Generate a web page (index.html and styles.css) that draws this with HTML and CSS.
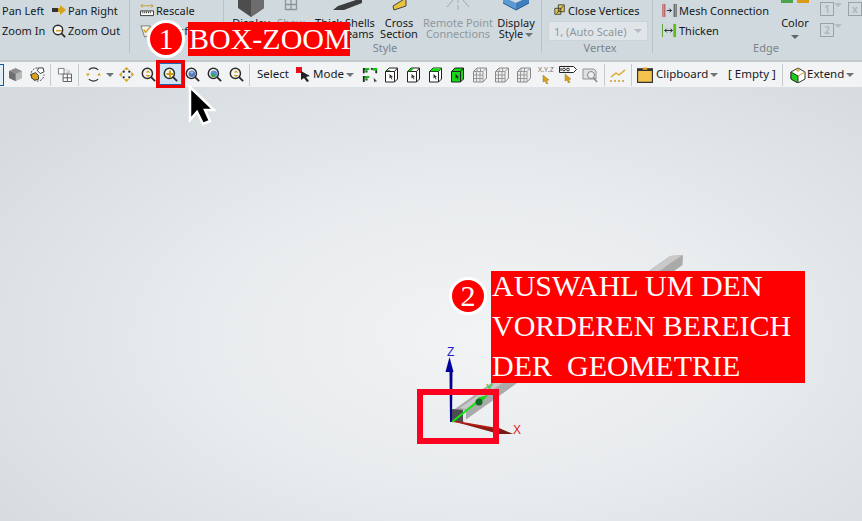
FILE: index.html
```html
<!DOCTYPE html>
<html lang="de">
<head>
<meta charset="utf-8">
<title>Box-Zoom</title>
<link rel="stylesheet" href="styles.css">
</head>
<body>
<svg class="defs" width="0" height="0">
  <symbol id="mag" viewBox="0 0 16 16">
    <circle cx="6.8" cy="6.8" r="5.4" fill="#f6f6f2" stroke="#2b2b2b" stroke-width="1.6"/>
    <path d="M10.8 10.8 15 15" stroke="#2b2b2b" stroke-width="2"/>
  </symbol>
  <symbol id="cube" viewBox="0 0 16 16">
    <path d="M1.5 4.5 5 1h8.5v11L10.500 15H1.500z" fill="#fff" stroke="#222"/>
    <path d="M1.500 4.500h9v10.500M10.500 4.500 13.500 1" fill="none" stroke="#222"/>
    <path d="M5.500 7l3.500 3-1.500.2 1 2-.8.4-1-2-1.200 1z" fill="#333"/>
  </symbol>
  <symbol id="gridcube" viewBox="0 0 16 16">
    <path d="M1.500 4.500 5 1h9.500v10L11 15H1.500z" fill="#eee" stroke="#888"/>
    <path d="M1.500 4.500H11V15M11 4.500 14.500 1M4.500 5v10M8 5v10M2 8h9M2 11.500h9M5 1v3M8.500 1v3" fill="none" stroke="#999"/>
  </symbol>
</svg>

<div class="page">
  <header class="ribbon">
    <section class="group g-nav">
      <div class="rows">
        <div class="row"><span class="nav-a">Pan Left</span>
          <svg class="i14" viewBox="0 0 14 10"><path d="M0 3h8V0l6 5-6 5V7H0z" fill="#d9a21b"/><path d="M0 3h6v4H0z" fill="#333"/></svg>
          <span>Pan Right</span></div>
        <div class="row"><span class="nav-a">Zoom In</span>
          <svg class="i14 tall"><use href="#mag"/><path d="M4 6h6v1.400H4z" fill="#d29a10"/></svg>
          <span>Zoom Out</span></div>
      </div>
    </section>
    <section class="group g-scale">
      <div class="rows">
        <div class="row"><svg class="i14 tall" viewBox="0 0 15 15"><path d="M1 3h13M1 3l2-2M1 3l2 2M14 3l-2-2M14 3l-2 2" stroke="#c79a2e" fill="none"/><path d="M.5 8.500h14v5H.5z" fill="#fff" stroke="#333"/><path d="M3 9v2M5 9v2M7 9v2M9 9v2M11 9v2" stroke="#333"/></svg><span>Rescale</span></div>
        <div class="row"><svg class="i14 tall" viewBox="0 0 15 15"><path d="M1 2h10l3 8-9 4z" fill="#f3f2e6" stroke="#777"/><path d="M4 6l2 3 5-6" stroke="#d5a021" fill="none" stroke-width="1.500"/></svg><span>Transform</span></div>
      </div>
    </section>
    <section class="group g-style">
      <div class="bigs">
        <div class="big w-display"><svg class="bigicon" viewBox="0 0 28 17"><path d="M1 -5 14 0l13-5v13L14 17 1 8z" fill="#4d4d4d"/><path d="M14 0v17L27 8V-5z" fill="#6d6d6d"/></svg><span>Display<br>Edges</span></div>
        <div class="big w-show dim"><svg class="bigicon" viewBox="0 0 28 17"><path d="M8.500 0v9.500h11V0M14 0v9.500M8.500 4.500h11" fill="none" stroke="#8d9599" stroke-width="1.300"/></svg><span>Show<br>Mesh</span></div>
        <div class="big w-thick"><svg class="bigicon" viewBox="0 0 46 17"><path d="M16 6 40 -2v5L22 10H11z" fill="#3b3d3f"/></svg><span>Thick Shells<br>and Beams</span></div>
        <div class="big w-cross"><svg class="bigicon" viewBox="0 0 28 17"><path d="M8 6 21 -2v8L9 10z" fill="#e9c33b" stroke="#444"/></svg><span>Cross<br>Section</span></div>
        <div class="big w-remote dim"><svg class="bigicon" viewBox="0 0 28 17"><path d="M14 -2v5M14 5v5M9 0 3 7M19 0l6 7" stroke="#a2a9ad" fill="none"/></svg><span>Remote Point<br>Connections</span></div>
        <div class="big w-dstyle"><svg class="bigicon" viewBox="0 0 28 17"><path d="M1 -3 14 3l13-6v6L14 10 1 3z" fill="#5b9bd5"/><path d="M14 3v7l13-7v-6z" fill="#3f7fbd"/><path d="M1 3 14 10l13-7" fill="none" stroke="#2b5c8d"/></svg><span>Display<br>Style<i class="caret"></i></span></div>
      </div>
      <div class="group-label">Style</div>
    </section>
    <section class="group g-vertex">
      <div class="rows">
        <div class="row"><svg class="i14 tall" viewBox="0 0 14 14"><path d="M1 5h7v7H1zM5 1h7v8H5z" fill="#e6cf55" stroke="#333"/><path d="M3 11l8-9" stroke="#333"/></svg><span>Close Vertices</span></div>
        <div class="combo"><span>1, (Auto Scale)</span><i class="caret pale"></i></div>
      </div>
      <div class="group-label">Vertex</div>
    </section>
    <section class="group g-edge">
      <div class="edge-body">
        <div class="rows">
          <div class="row"><svg class="i15" viewBox="0 0 16 14"><path d="M1 0v14M3 0v14" stroke="#b5302c"/><path d="M5 7h5M8 5l2 2-2 2" stroke="#222" fill="none"/><path d="M13 0v14M15 0v14" stroke="#333"/></svg><span>Mesh Connection</span></div>
          <div class="row"><svg class="i15" viewBox="0 0 16 14"><path d="M.500 0v14" stroke="#5aa02c"/><path d="M3 7h8M5 5 3 7l2 2M9 5l2 2-2 2" stroke="#222" fill="none"/><path d="M12 0h3v14h-3z" fill="#62bd18"/></svg><span>Thicken</span></div>
        </div>
        <div class="color">
          <div class="swatches"><i class="sw green"></i><i class="sw orange"></i></div>
          <span>Color</span>
          <i class="caret dark"></i>
        </div>
        <div class="boxes">
          <div class="boxline"><b class="numbox">1</b><i class="caret pale"></i><b class="numbox far">x</b></div>
          <div class="boxline"><b class="numbox">2</b><i class="caret pale"></i></div>
        </div>
      </div>
      <div class="group-label">Edge</div>
    </section>
  </header>

  <nav class="toolbar">
    <span class="stub"></span>
    <span class="slot w22"><svg class="i15" viewBox="0 0 15 15"><path d="M1 4 7.500 1 14 4v7l-6.500 3L1 11z" fill="#8f8f8f"/><path d="M1 4l6.500 3L14 4v7l-6.500 3V7z" fill="#b9b9b9"/><path d="M1 4l6.500 3v7L1 11z" fill="#6f6f6f"/></svg></span>
    <span class="slot w22"><svg class="i15" viewBox="0 0 16 16"><path d="M8 1a7 7 0 1 0 7 7" fill="none" stroke="#333" stroke-dasharray="2 1.500"/><path d="M9 1l5 0 1 4-4 2-3-3z" fill="#fff" stroke="#333"/><path d="M1 8l5-2 3 3v4l-4 1-3-2z" fill="#d9a21b" stroke="#333"/></svg></span>
    <span class="sep"></span>
    <span class="slot w23"><svg class="i15" viewBox="0 0 16 16"><path d="M1.500 1.500h6v6h-6z" fill="#fff" stroke="#777"/><path d="M9 2l4 4M13 3v3h-3" stroke="#bbb" fill="none"/><path d="M6.500 7.500h9v8h-9zM11 7.500v8M6.500 11.500h9" fill="#fff" stroke="#555"/></svg></span>
    <span class="sep"></span>
    <span class="slot w24"><svg class="i15" viewBox="0 0 16 16"><path d="M3 3a7 7 0 0 1 10 0M13 13a7 7 0 0 1-10 0" fill="none" stroke="#333" stroke-width="1.200"/><path d="M0 7l2 3 2-3zM12 9l2-3 2 3z" fill="#d9a21b"/></svg></span>
    <span class="slot w10"><i class="caret"></i></span>
    <span class="slot w22"><svg class="i15" viewBox="0 0 16 16"><path d="M8 0l3 3H5zM8 16l-3-3h6zM0 8l3-3v6zM16 8l-3 3V5z" fill="#d9a21b"/><circle cx="5" cy="5" r="1.200" fill="#222"/><circle cx="11" cy="5" r="1.200" fill="#222"/><circle cx="5" cy="11" r="1.200" fill="#222"/><circle cx="11" cy="11" r="1.200" fill="#222"/></svg></span>
    <span class="slot w22"><svg class="i15"><use href="#mag"/><path d="M4.500 5.500 7 3.500l2.500 2zM4.500 8 7 10l2.500-2z" fill="#d29a10"/></svg></span>
    <span class="slot w22 on"><svg class="i15"><use href="#mag"/><path d="M6 3.500h2V6h2.500v2H8v2.500H6V8H3.500V6H6z" fill="#d29a10"/></svg></span>
    <span class="slot w22"><svg class="i15"><use href="#mag"/><circle cx="6.800" cy="6.800" r="3.300" fill="#4c78c0"/><path d="M4 4.500l5 0-2 3z" fill="#9db8dd"/></svg></span>
    <span class="slot w22"><svg class="i15"><use href="#mag"/><circle cx="6.800" cy="6.800" r="3.300" fill="#5b8fd0"/><path d="M3.800 7.500 7 6l1 4-3 0z" fill="#2fae3a"/></svg></span>
    <span class="slot w22"><svg class="i15"><use href="#mag"/><path d="M4.500 5.500 7 3.500l2.500 2zM4.500 8 7 10l2.500-2z" fill="#d29a10"/></svg></span>
    <span class="sep"></span>
    <span class="tb-text select">Select</span>
    <span class="slot w20 mode-ic"><svg class="i15" viewBox="0 0 15 15"><path d="M0 0h6v6H0z" fill="#e8111b"/><path d="M5 4l9 5-4 1 3 4-2 1-3-4-3 2z" fill="#222"/></svg></span>
    <span class="tb-text mode">Mode<i class="caret"></i></span>
    <span class="slot w22"><svg class="i16" viewBox="0 0 18 18"><path d="M1 1h7v2H3v4H1zM10 1h7v6h-2V3h-5zM1 10h7v2H3v5H1z" fill="#222"/><path d="M3 1h5v2H3zM12 1h5v3h-5zM3 10h5v2H3z" fill="#17c217"/><circle cx="5" cy="5" r="1.500" fill="#2b8a2b"/><circle cx="5" cy="14" r="1.500" fill="#2b8a2b"/><path d="M13 12l4 4-2 .2-1 1.500z" fill="#444"/></svg></span>
    <span class="slot w22"><svg class="i16"><use href="#cube"/><path d="M3 3h3v1H3z" fill="#17c217"/></svg></span>
    <span class="slot w22"><svg class="i16"><use href="#cube"/><path d="M2 4.200 5 1.200h3L5 4.200z" fill="#17c217"/></svg></span>
    <span class="slot w22"><svg class="i16"><use href="#cube"/><path d="M2 4.200 5.200 1.200h8.300L10.500 4.200z" fill="#17e017"/></svg></span>
    <span class="slot w22"><svg class="i16" viewBox="0 0 16 16"><path d="M1.500 4.500 5 1h8.500v11L10.500 15H1.500z" fill="#18d818" stroke="#222"/><path d="M1.500 4.500h9v10.500M10.500 4.500 13.500 1" fill="none" stroke="#222"/><path d="M5.500 7l3.500 3-1.500.2 1 2-.8.4-1-2-1.200 1z" fill="#222"/></svg></span>
    <span class="slot w22"><svg class="i16"><use href="#gridcube"/></svg></span>
    <span class="slot w22"><svg class="i16"><use href="#gridcube"/></svg></span>
    <span class="slot w22"><svg class="i16"><use href="#gridcube"/></svg></span>
    <span class="slot w22 stack"><small class="xyz">X.Y.Z</small><svg class="ptr" viewBox="0 0 9 9"><path d="M1 0l6 5-2.500.4L6 8.500l-1.500.500L3 6 1 7z" fill="#d9a21b" stroke="#8a6a10" stroke-width=".4"/></svg></span>
    <span class="slot w22 stack"><svg class="tag" viewBox="0 0 18 7"><path d="M.5.500h14l3 3-3 3H.5z" fill="#fff" stroke="#222"/><circle cx="5" cy="3.500" r="1.400" fill="none" stroke="#222"/><circle cx="9" cy="3.500" r="1.400" fill="none" stroke="#222"/><path d="M2 2v3" stroke="#222"/></svg><svg class="ptr" viewBox="0 0 9 9"><path d="M1 0l6 5-2.500.4L6 8.500l-1.500.500L3 6 1 7z" fill="#d9a21b" stroke="#8a6a10" stroke-width=".4"/></svg></span>
    <span class="slot w22"><svg class="i16" viewBox="0 0 16 16"><path d="M1 2h11l2 2v8H1z" fill="#dfe2e4" stroke="#8e9498"/><path d="M10 9l5 6" stroke="#888" stroke-width="1.500"/><circle cx="9" cy="8" r="3.500" fill="#eee" stroke="#888"/></svg></span>
    <span class="sep w6"></span>
    <span class="slot w22"><svg class="i16" viewBox="0 0 16 14"><path d="M1 9 6 5l3 2 6-5" fill="none" stroke="#d9a21b" stroke-width="1.300"/><path d="M0 13h16" stroke="#c79a2e" stroke-dasharray="2 2" stroke-width="1.500"/></svg></span>
    <span class="sep"></span>
    <span class="slot w22"><svg class="i16" viewBox="0 0 14 14"><path d="M.5 1.500h13v12H.5z" fill="#f2c14e" stroke="#333"/><path d="M.5 1.500h13v2H.5z" fill="#333"/><path d="M5 .500h4v2H5z" fill="#d9a21b"/></svg></span>
    <span class="tb-text clip">Clipboard<i class="caret"></i></span>
    <span class="tb-text empty">[ Empty ]</span>
    <span class="sep"></span>
    <span class="slot ext"><svg class="i16" viewBox="0 0 16 16"><path d="M1 5l7-4 7 4v7l-7 4-7-4z" fill="#fff" stroke="#333"/><path d="M1 5l7 4v7l-7-4z" fill="#17d017" stroke="#333"/><path d="M8 9l7-4M6 3h4M8 1v4" stroke="#c79a2e"/></svg></span>
    <span class="tb-text extend">Extend<i class="caret"></i></span>
  </nav>

  <main class="viewport">
    <svg class="scene" viewBox="0 87 862 434">
      <path d="M452 411 670 256l13-1-.5 10L464 421l-12 1z" fill="#aaaaaa"/>
      <path d="M460 408 670 256l13-1-11 7L466 409z" fill="#c9c9c9"/>
      <path d="M452 422v-13l12 1v12z" fill="#4e4e52"/>
      <path d="M463 422v-12l3 .500v10z" fill="#e6e6e6"/>
      <path d="M452 421l47 8v5z" fill="#8c1a14"/>
      <path d="M452 421l47 8" stroke="#b01e16" stroke-width="1.500"/>
      <path d="M499 428l14 6h-14z" fill="#7a1a14"/>
      <path d="M449.500 372h3l-.5 50h-2z" fill="#00008c"/>
      <path d="M449.500 357 445.500 372h8z" fill="#00009c"/>
      <path d="M452 422 482 398" stroke="#13e513" stroke-width="2"/>
      <path d="M488 395l-10 2.500 3 5z" fill="#13d513"/>
      <circle cx="479" cy="402" r="3.500" fill="#0e6b1f"/>
      <text class="ax z" x="447" y="356">Z</text>
      <text class="ax x" x="513" y="434">X</text>
      <text class="ax y" x="486" y="392">Y</text>
    </svg>
    <div class="redbox"></div>
  </main>

  <div class="label box-zoom">BOX-ZOOM</div>
  <div class="badge b1">1</div>
  <div class="label callout"><span class="callout-text">AUSWAHL UM DEN<br>VORDEREN BEREICH<br>DER&nbsp; GEOMETRIE</span></div>
  <div class="badge b2">2</div>
  <div class="hot"></div>
  <svg class="cursor" viewBox="0 0 30 44"><path d="M3 3v33l7-8 6 12 7-3-5-11h9z" fill="#000" stroke="#fff" stroke-width="2.500" stroke-linejoin="miter"/></svg>
</div>
</body>
</html>
```

FILE: styles.css
```css
* { box-sizing: border-box; }
html, body { margin: 0; padding: 0; }
body { width: 862px; height: 521px; overflow: hidden; font-family: "Noto Sans", "Open Sans", sans-serif; font-size: 11px; color: #16191c; }
.defs { position: absolute; }
.page { position: relative; width: 862px; height: 521px; display: flex; flex-direction: column; overflow: hidden; }

.ribbon { height: 62px; flex: none; display: flex; background: #d0d9de; border-bottom: 2px solid #c4cace; overflow: hidden; }
.group { height: 53px; flex: none; border-right: 1px solid #b9c2c8; display: flex; flex-direction: column; }
.g-nav { width: 130px; }
.g-scale { width: 94px; padding-left: 10px; }
.g-style { width: 318px; padding-left: 9px; }
.g-vertex { width: 111px; padding-left: 6px; }
.g-edge { flex: 1; border-right: 0; padding-left: 9px; }

.rows { display: flex; flex-direction: column; height: 41px; flex: none; }
.row { height: 21px; flex: none; display: flex; align-items: center; gap: 2px; white-space: nowrap; }
.row:first-child { height: 20px; }
.g-nav .row { padding-left: 2px; }
.nav-a { width: 48px; }
.g-vertex .row { padding-left: 6px; }
.g-vertex .i14 { width: 12px; height: 12px; }
.i14 { width: 14px; height: 10px; flex: none; }
.i14.tall { height: 14px; }
.i15 { width: 15px; height: 15px; flex: none; }
.i16 { width: 16px; height: 16px; flex: none; }

.group-label { height: 13px; line-height: 13px; text-align: center; color: #7b858b; }
.g-style .group-label { padding-right: 4px; }
.g-edge .group-label { width: 208px; }

.bigs { display: flex; height: 41px; flex: none; }
.big { display: flex; flex-direction: column; align-items: center; text-align: center; line-height: 11px; flex: none; white-space: nowrap; }
.big span { display: block; }
.bigicon { width: 28px; height: 17px; flex: none; overflow: hidden; }
.w-display { width: 36px; }
.w-show { width: 32px; margin-left: 6px; }
.w-thick { width: 62px; margin-left: 7px; }
.w-thick .bigicon { width: 46px; }
.w-cross { width: 40px; margin-left: 3px; }
.w-remote { width: 72px; margin-left: 3px; }
.w-dstyle { width: 40px; margin-left: 2px; }
.dim { color: #8f989d; }

.caret { display: inline-block; width: 0; height: 0; border-left: 4px solid transparent; border-right: 4px solid transparent; border-top: 4px solid #6c7479; margin-left: 2px; vertical-align: middle; }
.caret.pale { border-top-color: #b4bcc1; }
.caret.dark { border-top-color: #5f676c; margin: 5px 0 0; }

.combo { width: 100px; height: 20px; margin-top: 1px; flex: none; background: #dfe5e8; border: 1px solid #cdd4d8; display: flex; align-items: center; justify-content: space-between; padding: 0 5px; color: #8f989d; }

.edge-body { display: flex; height: 41px; flex: none; }
.edge-body .rows { width: 113px; }
.color { width: 40px; display: flex; flex-direction: column; align-items: center; height: 41px; }
.color span { line-height: 14px; margin-top: 13px; }
.swatches { display: flex; gap: 4px; height: 3px; flex: none; }
.sw { display: block; width: 12px; height: 3px; }
.green { background: #4ba54b; }
.orange { background: #d99a1a; }
.boxes { margin-left: 5px; padding-top: 2px; display: flex; flex-direction: column; gap: 7px; }
.boxline { display: flex; align-items: center; height: 14px; }
.boxline .caret { margin-left: 0; transform: translateY(-4px); }
.numbox { width: 14px; height: 14px; flex: none; border: 1px solid #9aa2a7; color: #b0b8bd; font-size: 10px; line-height: 12px; text-align: center; display: block; }
.numbox.far { margin-left: 6px; }

.toolbar { height: 25px; flex: none; display: flex; align-items: center; background: #f1f3f4; font-size: 11.5px; overflow: hidden; }
.stub { width: 4px; height: 22px; flex: none; border: 1px solid #0b5aa5; border-left: 0; background: #e4eef6; }
.slot { height: 22px; flex: none; display: flex; align-items: center; justify-content: center; }
.stack { flex-direction: column; gap: 1px; }
.w10 { width: 10px; } .w20 { width: 20px; } .w22 { width: 22px; } .w23 { width: 23px; } .w24 { width: 24px; }
.on { background: #cfe3f5; }
.w10 .caret { margin: 0; }
.sep { width: 5px; height: 22px; flex: none; display: flex; justify-content: center; }
.sep::before { content: ""; width: 1px; height: 100%; background: #c5cacd; }
.sep.w6 { width: 6px; }
.tb-text { flex: none; white-space: nowrap; display: block; padding-bottom: 2px; }
.select { width: 41px; padding-left: 5px; }
.mode { width: 46px; }
.clip { width: 72px; }
.empty { width: 52px; }
.extend { width: 52px; }
.ext { width: 19px; margin-left: 3px; }
.xyz { font-size: 7px; line-height: 8px; color: #777; letter-spacing: .2px; }
.ptr { width: 9px; height: 9px; }
.tag { width: 18px; height: 7px; }

.viewport { flex: 1; position: relative; background: radial-gradient(ellipse 600px 330px at 480px 250px, #f1f3f4 0%, #e9ecee 45%, #d5dbdf 100%); }
.scene { position: absolute; left: 0; top: 0; width: 862px; height: 434px; }
.ax { font-family: "Liberation Sans", sans-serif; font-size: 12px; }
.ax.z { fill: #1f1fc8; }
.ax.x { fill: #e01818; }
.ax.y { fill: #18d018; font-size: 10px; }
.redbox { position: absolute; left: 417px; top: 302px; width: 82px; height: 55px; border: 6px solid #fb0320; }

.label { position: absolute; background: #ff0000; color: #fff; font-family: "Liberation Serif", serif; white-space: nowrap; }
.box-zoom { left: 188px; top: 22px; width: 162px; height: 34px; font-size: 30px; line-height: 33px; padding-left: 1px; }
.callout { left: 491px; top: 271px; width: 314px; height: 112px; font-size: 30px; line-height: 40px; padding-left: 1px; }
.callout-text { display: block; position: relative; top: -5px; }
.badge { position: absolute; width: 38px; height: 38px; border-radius: 50%; background: #ff0000; border: 3px solid #fff; color: #fff; font-family: "Liberation Serif", serif; font-size: 30px; line-height: 32px; text-align: center; }
.b1 { left: 147px; top: 20px; }
.b2 { left: 449px; top: 277px; }
.hot { position: absolute; left: 156px; top: 60px; width: 29px; height: 28px; border: 3px solid #f00000; box-shadow: inset 0 0 0 1px #1c6ab0; }
.cursor { position: absolute; left: 187px; top: 84px; width: 30px; height: 44px; }
```
